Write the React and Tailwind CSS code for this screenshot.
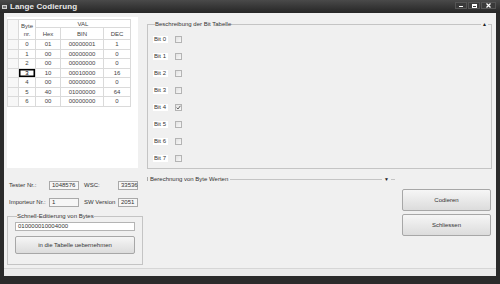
import React from 'react'

const rows = [
  ['0', '01', '00000001', '1'],
  ['1', '00', '00000000', '0'],
  ['2', '00', '00000000', '0'],
  ['3', '10', '00010000', '16'],
  ['4', '00', '00000000', '0'],
  ['5', '40', '01000000', '64'],
  ['6', '00', '00000000', '0'],
]

function TitleBar() {
  return (
    <div className="h-[13px] flex items-center bg-gradient-to-b from-[#4a4a4a] to-[#262626] pl-[2px] pr-[4px]">
      <div className="w-[5px] h-[4px] border border-[#cfcfcf] bg-[#777] mr-[3px]" />
      <span className="text-[8px] leading-none text-[#e8e8e8] font-semibold tracking-[0.1px]">Lange Codierung</span>
      <div className="ml-auto flex items-start gap-[1px] self-start mt-[2px]">
        <div className="w-[12px] h-[7px] bg-[#3a3a3a] border border-[#555] flex items-end justify-center pb-[1px]">
          <div className="w-[4px] h-[1px] bg-white" />
        </div>
        <div className="w-[12px] h-[7px] bg-[#3a3a3a] border border-[#555] flex items-center justify-center">
          <div className="w-[5px] h-[4px] border border-white border-t-2" />
        </div>
        <div className="w-[15px] h-[7px] bg-[#3a3a3a] border border-[#555] flex items-center justify-center">
          <svg width="5" height="5" viewBox="0 0 5 5"><path d="M0.5 0.5 L4.5 4.5 M4.5 0.5 L0.5 4.5" stroke="#fff" strokeWidth="1.2" /></svg>
        </div>
      </div>
    </div>
  )
}

function ByteTable() {
  const c = 'border-r border-b border-[#dadada] flex items-center justify-center'
  return (
    <div className="w-[131px] h-[151px] bg-white pt-[2px] overflow-hidden">
      <div className="grid grid-cols-[11px_17px_25px_43px_27px] grid-rows-[8px_12px_repeat(7,9.5px)] border-t border-l border-[#dadada] w-fit text-[6px] leading-none text-[#444]">
        <div className={c + ' row-span-2 bg-[#f7f7f7]'} />
        <div className={c + ' row-span-2 flex-col gap-[2px]'}>
          <span>Byte</span>
          <span>nr.</span>
        </div>
        <div className={c + ' col-span-3'}>VAL</div>
        <div className={c}>Hex</div>
        <div className={c}>BIN</div>
        <div className={c}>DEC</div>
        {rows.map((r) => (
          <React.Fragment key={r[0]}>
            <div className={c + ' bg-[#f7f7f7]'} />
            <div className={c + (r[0] === '3' ? ' shadow-[inset_0_0_0_1.5px_#000] text-black' : '')}>{r[0]}</div>
            <div className={c}>{r[1]}</div>
            <div className={c}>{r[2]}</div>
            <div className={c}>{r[3]}</div>
          </React.Fragment>
        ))}
      </div>
    </div>
  )
}

function BitGroup() {
  const bits = [0, 1, 2, 3, 4, 5, 6, 7]
  return (
    <fieldset className="relative w-[345px] h-[148px] border border-[#c4c4c4] mt-[4px] ml-[9px] px-[5px] min-w-0">
      <legend className="ml-[2px] text-[6px] leading-[6px] text-[#333]">Beschreibung der Bit Tabelle</legend>
      <span className="absolute right-[3px] top-[-6px] text-[5px] text-[#222] bg-[#f0f0f0] px-[1px] leading-[6px]">▲</span>
      <div className="flex flex-col gap-[10px] pt-[9px]">
        {bits.map((b) => (
          <div key={b} className="flex items-center h-[7px]">
            <span className="text-[6px] leading-[7px] text-[#333] bg-white px-[1px] w-[15px]">Bit {b}</span>
            <div className="ml-[7px] w-[7px] h-[7px] border border-[#b4b4b4] bg-gradient-to-br from-[#e2e2e2] to-[#f8f8f8] flex items-center justify-center">
              {b === 4 && (
                <svg width="5" height="5" viewBox="0 0 5 5"><path d="M0.6 2.6 L2 4 L4.4 0.8" fill="none" stroke="#555" strokeWidth="0.9" /></svg>
              )}
            </div>
          </div>
        ))}
      </div>
    </fieldset>
  )
}

function Field({ value, w }) {
  return (
    <div className={'h-[9px] border border-[#a9a9a9] bg-[#f6f6f6] text-[6px] leading-[7px] text-[#333] pl-[2px] ' + w}>{value}</div>
  )
}

function WinButton({ label, h }) {
  return (
    <div className={'w-[89px] border border-[#a7a7a7] rounded-[2px] bg-gradient-to-b from-[#f6f6f6] to-[#dcdcdc] flex items-center justify-center text-[6px] text-[#333] ' + h}>
      {label}
    </div>
  )
}

export default function App() {
  return (
    <div className="w-[500px] h-[284px] bg-[#2b2b2b] flex flex-col font-['Liberation_Sans',Arial,sans-serif] overflow-hidden">
      <TitleBar />
      <div className="mx-[4px] h-[263px] bg-[#f0f0f0] flex flex-col">
        <div className="h-[156px] flex pt-[4px] pl-[3px]">
          <ByteTable />
          <BitGroup />
        </div>
        <div className="h-[99px] flex">
          <div className="w-[136px] ml-[3px] flex flex-col">
            <div className="flex items-center mt-[12px] text-[6px] text-[#333]">
              <span className="w-[42px] pl-[2px]">Tester Nr.:</span>
              <Field value="1048576" w="w-[30px]" />
              <span className="w-[39px] pl-[5px]">WSC:</span>
              <Field value="33536" w="w-[20px]" />
            </div>
            <div className="flex items-center mt-[8px] text-[6px] text-[#333]">
              <span className="w-[42px] pl-[2px]">Importeur Nr.:</span>
              <Field value="1" w="w-[30px]" />
              <span className="w-[39px] pl-[5px]">SW Version</span>
              <Field value="2051" w="w-[20px]" />
            </div>
            <fieldset className="mt-[6px] h-[52px] border border-[#c4c4c4] px-[7px] min-w-0">
              <legend className="ml-[2px] text-[6px] leading-[6px] text-[#333]">Schnell-Editierung von Bytes</legend>
              <div className="mt-[3px] h-[9px] border border-[#b4b4b4] bg-white text-[6px] leading-[7px] text-[#333] pl-[2px]">010000010004000</div>
              <div className="mt-[5px] h-[18px] border border-[#a7a7a7] rounded-[2px] bg-gradient-to-b from-[#f6f6f6] to-[#dcdcdc] flex items-center justify-center text-[6px] text-[#333]">
                in die Tabelle uebernehmen
              </div>
            </fieldset>
          </div>
          <div className="flex-1 ml-[4px] flex flex-col">
            <div className="mt-[7px] w-[248px] h-[6px] flex items-center text-[6px] text-[#333]">
              <div className="w-[1px] h-[4px] bg-[#aaa]" />
              <span className="px-[2px] leading-[6px]">Berechnung von Byte Werten</span>
              <div className="flex-1 h-[1px] bg-[#c4c4c4]" />
              <span className="text-[5px] leading-[6px] px-[2px] text-[#222]">▼</span>
              <div className="w-[4px] h-[1px] bg-[#c4c4c4]" />
            </div>
            <div className="self-end mr-[5px] mt-[7px] flex flex-col gap-[3px]">
              <WinButton label="Codieren" h="h-[22px]" />
              <WinButton label="Schliessen" h="h-[22px]" />
            </div>
          </div>
        </div>
        <div className="flex-1 border-t border-[#d6d6d6] bg-[#ececec]" />
      </div>
    </div>
  )
}
